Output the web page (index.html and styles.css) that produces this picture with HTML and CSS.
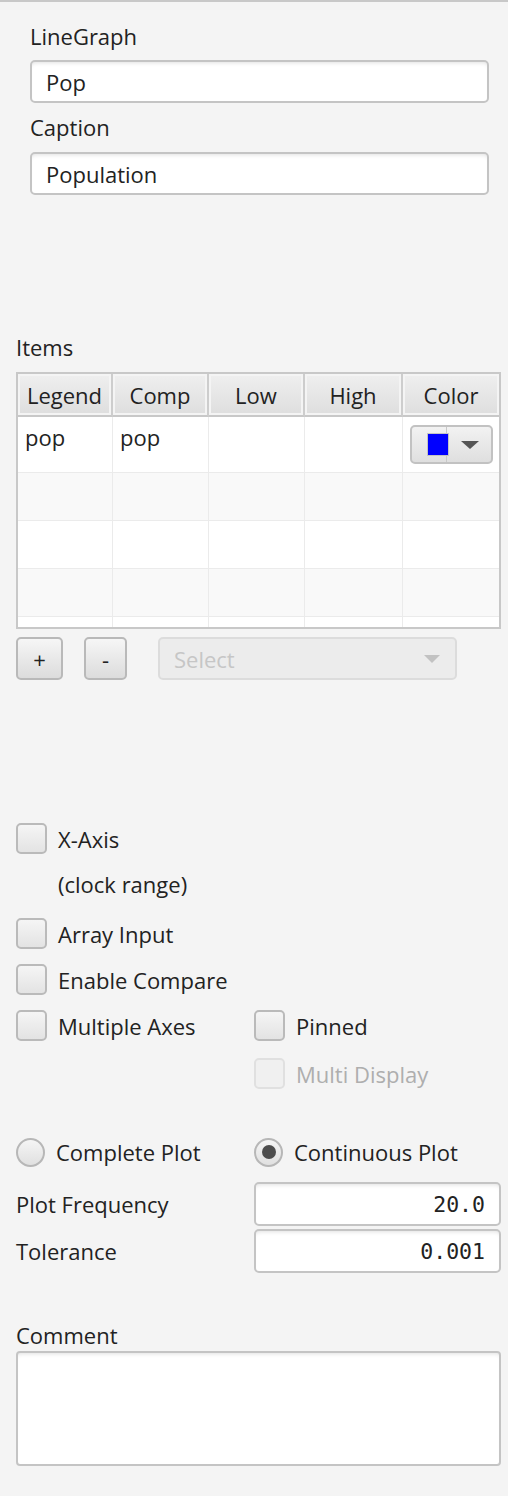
FILE: index.html
```html
<!DOCTYPE html>
<html lang="en">
<head>
  <meta charset="UTF-8" />
  <title>LineGraph</title>
  <link rel="stylesheet" href="styles.css">
</head>
<body>
  <div class="topline"></div>

  <div class="panel">
    <div class="head-fields">
      <label class="field-label" for="graphName">LineGraph</label>
      <input class="text-field" id="graphName" type="text" value="Pop" />
      <label class="field-label caption-label" for="caption">Caption</label>
      <input class="text-field caption-field" id="caption" type="text" value="Population" />
    </div>

    <div class="items-label">Items</div>
    <div class="items-table">
      <table>
        <colgroup>
          <col style="width:95px"><col style="width:96px"><col style="width:96px"><col style="width:98px"><col style="width:96px">
        </colgroup>
        <thead>
          <tr><th>Legend</th><th>Comp</th><th>Low</th><th>High</th><th>Color</th></tr>
        </thead>
        <tbody>
          <tr class="first">
            <td>pop</td><td>pop</td><td></td><td></td>
            <td>
              <div class="color-picker">
                <span class="swatch-part"><span class="swatch"></span></span>
                <span class="down-arrow"></span>
              </div>
            </td>
          </tr>
          <tr class="alt"><td></td><td></td><td></td><td></td><td></td></tr>
          <tr><td></td><td></td><td></td><td></td><td></td></tr>
          <tr class="alt"><td></td><td></td><td></td><td></td><td></td></tr>
          <tr><td></td><td></td><td></td><td></td><td></td></tr>
        </tbody>
      </table>
    </div>

    <div class="table-actions">
      <button class="btn btn-add">+</button>
      <button class="btn btn-remove">-</button>
      <div class="combo disabled">
        <span>Select</span>
        <span class="down-arrow"></span>
      </div>
    </div>

    <div class="check-row x-axis"><span class="check"></span>X-Axis</div>
    <div class="hint">(clock range)</div>
    <div class="check-row array"><span class="check"></span>Array Input</div>
    <div class="check-row compare"><span class="check"></span>Enable Compare</div>

    <div class="two-col axes">
      <div class="check-row"><span class="check"></span>Multiple Axes</div>
      <div class="check-row"><span class="check"></span>Pinned</div>
    </div>
    <div class="two-col multi">
      <div></div>
      <div class="check-row disabled"><span class="check"></span>Multi Display</div>
    </div>

    <div class="two-col radios">
      <div class="radio-row"><span class="radio"></span>Complete Plot</div>
      <div class="radio-row"><span class="radio selected"></span>Continuous Plot</div>
    </div>

    <div class="two-col num-row freq">
      <span>Plot Frequency</span>
      <input class="num-field" type="text" value="20.0" />
    </div>
    <div class="two-col num-row tol">
      <span>Tolerance</span>
      <input class="num-field" type="text" value="0.001" />
    </div>

    <div class="comment-label">Comment</div>
    <textarea class="comment"></textarea>
  </div>
</body>
</html>
```

FILE: styles.css
```css
* { margin: 0; padding: 0; box-sizing: border-box; }

body {
  background: #f4f4f4;
  font-family: "Open Sans", "Liberation Sans", sans-serif;
  font-size: 22px;
  line-height: 26px;
  color: #222;
}

.topline { height: 2px; background: #c8c8c8; }

.panel { padding: 0 7px 30px 16px; }

/* name + caption */
.head-fields { padding: 21px 12px 0 14px; }
.field-label { display: block; }
.caption-label { margin-top: 11px; }

.text-field, .num-field, .comment {
  display: block; width: 100%; height: 43px;
  border: 2px solid #c4c4c4; border-radius: 5px;
  background: #fff;
  box-shadow: inset 0 4px 4px -3px rgba(0, 0, 0, 0.12);
  font: inherit; color: #222;
  padding: 0 14px; outline: none;
}
.text-field { margin-top: 11px; }
.caption-field { margin-top: 12px; }

/* items table */
.items-label { margin-top: 139px; }
.items-table {
  margin-top: 12px; height: 257px; overflow: hidden;
  border: 2px solid #c8c8c8; background: #fff;
}
.items-table table {
  width: 481px; table-layout: fixed;
  border-collapse: separate; border-spacing: 0;
}
.items-table th {
  height: 43px; font-weight: normal; text-align: center;
  background: linear-gradient(#efefef, #dedede);
  border-right: 2px solid #cdcdcd; border-bottom: 2px solid #c8c8c8;
  box-shadow: inset 0 0 0 2px #f4f4f4;
}
.items-table th:last-child { border-right: none; }
.items-table td {
  height: 48px; vertical-align: top;
  padding: 7px 0 0 7px;
  border-right: 1px solid #ebebeb; border-bottom: 1px solid #ebebeb;
}
.items-table td:last-child { border-right: none; }
.items-table tr.first td { height: 56px; }
.items-table tr.first td:last-child { padding: 8px 0 0 7px; }
.items-table tr.alt td { background: #f9f9f9; }

.color-picker {
  display: flex; align-items: center;
  width: 83px; height: 39px;
  border: 2px solid #c2c2c2; border-radius: 5px;
  background: linear-gradient(#f2f2f2, #dfdfdf);
}
.swatch-part {
  display: flex; align-items: center;
  width: 35px; height: 100%;
  border-right: 1px solid #c8c8c8;
}
.swatch {
  width: 23px; height: 23px; margin-left: 15px; margin-right: -3px;
  background: #0000ff; border: 1px solid #c4c4c4;
}
.down-arrow {
  width: 0; height: 0; margin-left: 14px;
  border-left: 9px solid transparent; border-right: 9px solid transparent;
  border-top: 8px solid #555;
}

/* buttons under table */
.table-actions { display: flex; align-items: center; margin-top: 8px; }
.btn {
  height: 43px; width: 47px;
  border: 2px solid #b9b9b9; border-radius: 5px;
  background: linear-gradient(#f6f6f6, #dcdcdc);
  font: inherit; color: #222;
}
.btn-remove { width: 43px; margin-left: 21px; }
.combo {
  display: flex; align-items: center; justify-content: space-between;
  width: 299px; height: 43px; margin-left: 31px;
  padding: 0 15px 0 14px;
  border: 2px solid #dcdcdc; border-radius: 5px;
  background: #ececec;
}
.combo.disabled { color: #c6c6c6; }
.combo .down-arrow {
  border-left-width: 8px; border-right-width: 8px; border-top: 8px solid #c2c2c2;
}

/* checkboxes */
.check-row { display: flex; align-items: center; height: 31px; }
.check {
  width: 31px; height: 31px; margin-right: 11px; flex: none;
  border: 2px solid #bababa; border-radius: 5px;
  background: linear-gradient(#f5f5f5, #e3e3e3);
}
.check-row.disabled { color: #aeaeae; }
.check-row.disabled .check { border-color: #e0e0e0; background: #f0f0f0; }

.x-axis { margin-top: 143px; }
.hint { margin-top: 17px; padding-left: 42px; }
.array { margin-top: 21px; }
.compare { margin-top: 15px; }

.two-col { display: grid; grid-template-columns: 238px 1fr; align-items: center; }
.axes { margin-top: 15px; }
.multi { margin-top: 17px; }

/* radios */
.radios { margin-top: 48px; }
.radio-row { display: flex; align-items: center; height: 30px; }
.radio {
  width: 29px; height: 29px; margin-right: 11px; flex: none;
  border: 2px solid #b7b7b7; border-radius: 50%;
  background: linear-gradient(#f5f5f5, #e0e0e0);
  display: flex; align-items: center; justify-content: center;
}
.radio.selected::after {
  content: ""; width: 14px; height: 14px; border-radius: 50%; background: #4d4d4d;
}

/* numeric fields */
.num-field {
  height: 44px; text-align: right; padding-right: 14px;
  font-family: "DejaVu Sans Mono", monospace; font-size: 21.5px;
}
.freq { margin-top: 15px; }
.tol { margin-top: 3px; }

/* comment */
.comment-label { margin-top: 49px; }
.comment { margin-top: 3px; height: 115px; resize: none; border-radius: 4px; }
```
